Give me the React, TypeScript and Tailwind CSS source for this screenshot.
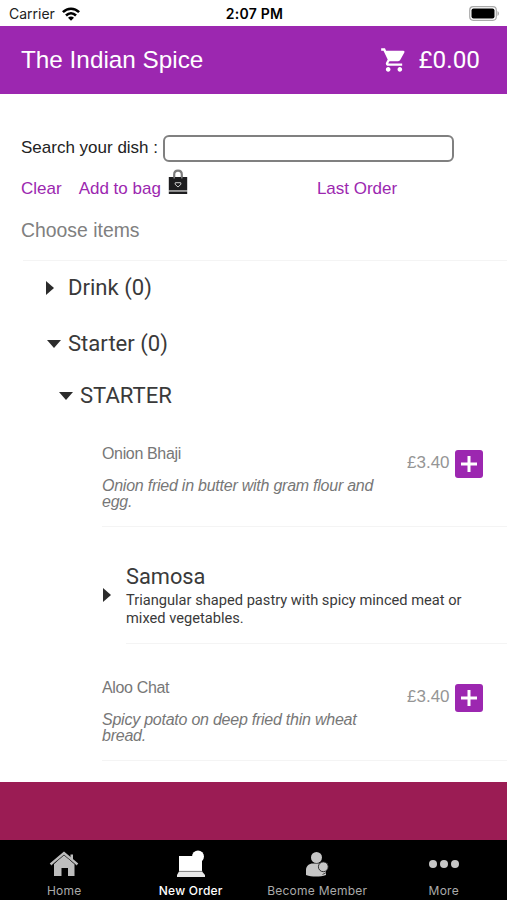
import React from 'react';
import { MdShoppingCart } from 'react-icons/md';

const menuItems = [
  {
    name: 'Onion Bhaji',
    description: 'Onion fried in butter with gram flour and egg.',
    price: '£3.40',
  },
  {
    name: 'Aloo Chat',
    description: 'Spicy potato on deep fried thin wheat bread.',
    price: '£3.40',
  },
];

const ArrowRight = () => (
  <svg width="8" height="14" viewBox="0 0 8 14" className="shrink-0 fill-[#2b2b2b]">
    <path d="M0 0L8 7L0 14Z" />
  </svg>
);

const ArrowDown = () => (
  <svg width="14" height="8" viewBox="0 0 14 8" className="shrink-0 fill-[#2b2b2b]">
    <path d="M0 0H14L7 8Z" />
  </svg>
);

const WifiIcon = () => (
  <svg width="18" height="14" viewBox="0 0 18 14" className="ml-[7px]">
    <g fill="none" stroke="#000" strokeWidth="2.6">
      <path d="M0.900 5.200C5.500 0.600 12.500 0.600 17.100 5.200" />
      <path d="M4 8.500C7 5.600 11 5.600 14 8.500" />
    </g>
    <path d="M6 10.700C7.700 9 10.300 9 12 10.700L9 13.800Z" />
  </svg>
);

const BagIcon = () => (
  <svg width="20" height="26" viewBox="0 0 20 26" className="ml-[7px]">
    <path d="M6.200 9V5.500C6.200 0.400 13.800 0.400 13.800 5.500V9" fill="none" stroke="#7b7b7b" strokeWidth="2.200" />
    <path d="M0.800 8H19.200V21.300H0.800ZM0.800 22.400H19.200V25H0.800Z" fill="#1d1d1f" />
    <path d="M0.800 21.800H19.200" stroke="#888" strokeWidth="1" />
    <path d="M6.200 8V9.500M13.800 8V9.500" stroke="#777" strokeWidth="1.600" />
    <path d="M7.300 13.700H12.700L13 15.200L10 18L7 15.200Z" fill="none" stroke="#ccc" strokeWidth="1" />
  </svg>
);

const HomeIcon = () => (
  <svg width="30" height="26" viewBox="0 0 30 26">
    <path d="M21.500 3.500H24V10L21.500 8Z" fill="#bdbdbd" />
    <path d="M5 13L15 4L25.500 13V25H19V17H12.500V25H5Z" fill="#bdbdbd" />
    <path d="M2 14.800L15 3.800L28 14.800" fill="none" stroke="#222" strokeWidth="1" />
    <path d="M1.500 13.300L15 2L28.500 13.300" fill="none" stroke="#bdbdbd" strokeWidth="2.400" />
  </svg>
);

const NewOrderIcon = () => (
  <svg width="30" height="28" viewBox="0 0 30 28" fill="#fff">
    <path d="M3 6H22V11H26V21H3Z" />
    <circle cx="22" cy="6.500" r="6" />
    <path d="M3 21.500H26L29 25V27H1V25Z" fill="#e8e8e8" />
    <path d="M3 21.300H26.500" stroke="#999" strokeWidth="0.700" />
  </svg>
);

const MemberIcon = () => (
  <svg width="24" height="26" viewBox="0 0 24 26" fill="#c6c6c6">
    <circle cx="11.500" cy="6.500" r="5.500" />
    <path d="M1 24V19C1 15 4 12.500 8 12.500H13C17 12.500 21 15 21 19V24C15 26 7 26 1 24Z" />
    <circle cx="18.300" cy="15.800" r="4.900" stroke="#222" strokeWidth="0.900" />
    <path d="M17.500 23.500L21 21.700" stroke="#222" strokeWidth="0.800" />
  </svg>
);

const MoreIcon = () => (
  <svg width="30" height="8" viewBox="0 0 30 8" fill="#c6c6c6">
    <circle cx="4" cy="4" r="4" />
    <circle cx="15" cy="4" r="4" />
    <circle cx="26" cy="4" r="4" />
  </svg>
);

const tabs = [
  { label: 'Home', icon: <HomeIcon />, active: false },
  { label: 'New Order', icon: <NewOrderIcon />, active: true },
  { label: 'Become Member', icon: <MemberIcon />, active: false },
  { label: 'More', icon: <MoreIcon />, active: false },
];

const MenuItem = ({ item }: { item: (typeof menuItems)[number] }) => (
  <div className="ml-[102px] flex h-[117px] border-b border-[#f4f4f4] text-[#777]">
    <div className="w-[290px] pt-[34px]">
      <h3 className="text-[16px] leading-5 tracking-[-0.350px]">{item.name}</h3>
      <p className="mt-[14px] text-[16px] leading-4 tracking-[-0.240px] italic">{item.description}</p>
    </div>
    <span className="ml-[15px] w-[48px] pt-[43px] text-[17px] leading-5 text-[#959595]">{item.price}</span>
    <button className="mt-[40px] flex size-[28px] items-center justify-center rounded-[3px] bg-[#9c27b0]">
      <svg width="16" height="16" viewBox="0 0 16 16" stroke="#fff" strokeWidth="3">
        <path d="M0 8H16M8 0V16" />
      </svg>
    </button>
  </div>
);

const App = () => {
  return (
    <div className="flex h-[900px] w-[507px] flex-col overflow-hidden bg-white font-['Liberation_Sans',sans-serif]">
      {/* Status Bar */}
      <div className="grid h-[26px] shrink-0 grid-cols-3 items-center pr-[7px] pl-[9px] font-['Inter',sans-serif] text-[14px] text-[#222]">
        <div className="flex items-center pt-px">
          <span>Carrier</span>
          <WifiIcon />
        </div>
        <span className="pt-px text-center text-[14px] font-semibold tracking-[0.250px] text-black">2:07 PM</span>
        <svg width="31" height="15" viewBox="0 0 31 15" className="justify-self-end">
          <rect x="0.700" y="0.700" width="26.600" height="13.600" rx="3.500" fill="#fff" stroke="#aaa" strokeWidth="1.200" />
          <rect x="2.500" y="2.500" width="23" height="10" rx="2" />
          <path d="M28.500 5C30.500 6 30.500 9 28.500 10Z" fill="#aaa" />
        </svg>
      </div>

      {/* Header */}
      <header className="flex h-[68px] shrink-0 items-center justify-between bg-[#9c27b0] pr-[27px] pl-[21px] text-white">
        <h1 className="text-[24.3px]">The Indian Spice</h1>
        <div className="flex items-center gap-[10px] font-['Roboto',sans-serif] text-[24.300px]">
          <MdShoppingCart size={28} />
          <span>£0.00</span>
        </div>
      </header>

      {/* Search */}
      <section className="h-[166px] shrink-0 pt-[41px] pl-[21px] text-[17px]">
        <div className="flex h-[27px] items-center text-[#222]">
          <label htmlFor="dish" className="w-[142px] pb-[2px] leading-5 whitespace-nowrap">Search your dish :</label>
          <input id="dish" className="h-[27px] w-[291px] rounded-[6px] border-2 border-[#808080] bg-white" />
        </div>
        <div className="flex h-[43px] items-center pt-[11px] text-[#9c27b0]">
          <a>Clear</a>
          <a className="ml-[17px]">Add to bag</a>
          <span className="-mt-[15px]"><BagIcon /></span>
          <a className="ml-[129px]">Last Order</a>
        </div>
        <h2 className="mt-[13px] text-[19.400px] leading-6 text-[#808080]">Choose items</h2>
      </section>

      {/* Menu */}
      <main className="h-[522px] shrink-0 overflow-hidden">
        <div className="ml-[23px] border-t border-[#f4f4f4]" />
        <div className="font-['Roboto',sans-serif] text-[22.100px] text-[#3a3a3a]">
          <div className="flex h-[54px] items-center gap-[14px] pl-[46px]">
            <ArrowRight />
            <span>Drink (0)</span>
          </div>
          <div className="flex h-[58px] items-center gap-[7px] pl-[47px]">
            <ArrowDown />
            <span>Starter (0)</span>
          </div>
          <div className="flex h-[45px] items-center gap-[7px] pl-[59px]">
            <ArrowDown />
            <span>STARTER</span>
          </div>
        </div>
        <div className="-mt-[8px]">
          <MenuItem item={menuItems[0]} />
        </div>
        <div className="flex h-[117px] pl-[103px] font-['Roboto',sans-serif] text-[#3a3a3a]">
          <div className="w-[23px] pt-[61px]">
            <ArrowRight />
          </div>
          <div className="grow border-b border-[#f4f4f4] pt-[36px]">
            <h3 className="text-[21.800px] leading-7">Samosa</h3>
            <p className="w-[350px] text-[14.650px] leading-[18px]">
              Triangular shaped pastry with spicy minced meat or mixed vegetables.
            </p>
          </div>
        </div>
        <MenuItem item={menuItems[1]} />
      </main>

      <div className="h-[58px] shrink-0 bg-[#9b1c54]" />

      {/* Tab Bar */}
      <nav className="grid h-[60px] shrink-0 grid-cols-4 bg-black pl-px font-['Inter',sans-serif] text-[12px] tracking-[0.250px] text-[#aaa]">
        {tabs.map((tab) => (
          <div key={tab.label} className="flex flex-col items-center">
            <div className="flex h-[43px] items-center pt-[5px]">{tab.icon}</div>
            <span className={tab.active ? 'leading-4 font-medium whitespace-nowrap text-white' : 'leading-4 whitespace-nowrap'}>{tab.label}</span>
          </div>
        ))}
      </nav>
    </div>
  );
};

export default App;
